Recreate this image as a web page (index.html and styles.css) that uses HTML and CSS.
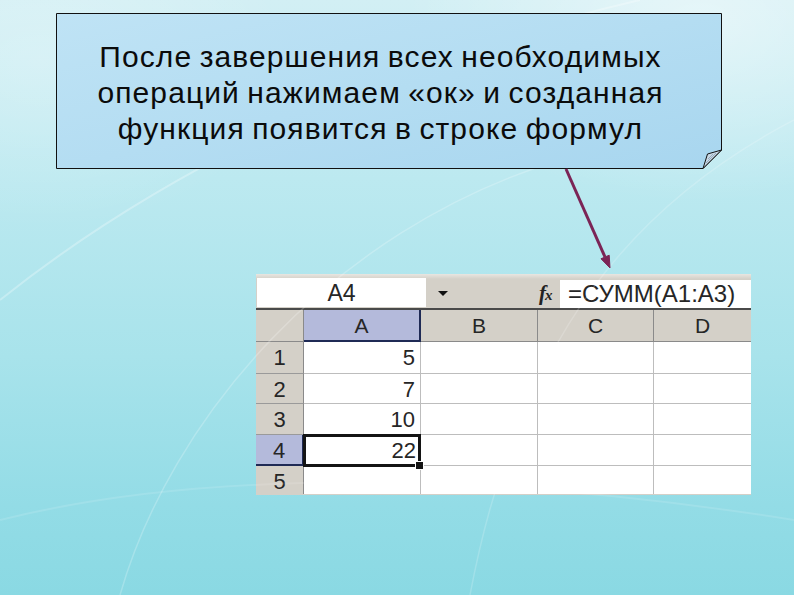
FILE: index.html
```html
<!DOCTYPE html>
<html lang="ru">
<head>
<meta charset="utf-8">
<title>Функция СУММ</title>
<link rel="stylesheet" href="styles.css">
</head>
<body>
<div class="slide">
  <svg class="bg-deco" width="794" height="595" viewBox="0 0 794 595" aria-hidden="true">
    <path d="M0 300 C 150 180, 380 60, 640 0" fill="none" stroke="#ffffff" stroke-opacity="0.28" stroke-width="2"/>
    <path d="M120 595 C 170 420, 330 230, 560 160" fill="none" stroke="#ffffff" stroke-opacity="0.22" stroke-width="1.5"/>
    <path d="M794 120 C 640 200, 520 330, 470 595" fill="none" stroke="#ffffff" stroke-opacity="0.18" stroke-width="1.5"/>
    <path d="M0 520 C 200 470, 480 470, 794 520" fill="none" stroke="#ffffff" stroke-opacity="0.12" stroke-width="2"/>
  </svg>

  <div class="callout">
    <svg class="callout-shape" width="666" height="156" viewBox="0 0 666 156" aria-hidden="true">
      <defs>
        <linearGradient id="cg" x1="0" y1="0" x2="1" y2="1">
          <stop offset="0" stop-color="#bfe3f5"/>
          <stop offset="0.5" stop-color="#b4ddf2"/>
          <stop offset="1" stop-color="#a8d6ef"/>
        </linearGradient>
      </defs>
      <polygon points="0.5,0.5 665.5,0.5 665.5,137 647,155.5 0.5,155.5" fill="url(#cg)" stroke="#111" stroke-width="1"/>
      <polygon points="647,155.5 651.5,141 665.5,137" fill="#c9d9e6" stroke="#111" stroke-width="1"/>
      <path d="M650 150 L 660 140 M 652 146 L 657 141" stroke="#8aa0b4" stroke-width="0.8"/>
    </svg>
    <p class="callout-text">После завершения всех необходимых<br>операций нажимаем «ок» и созданная<br>функция появится в строке формул</p>
  </div>

  <svg class="arrow" width="794" height="595" viewBox="0 0 794 595" aria-hidden="true">
    <line x1="566" y1="169" x2="605" y2="257" stroke="#7b2456" stroke-width="3"/>
    <polygon points="610,268 609.2,255.2 601,258.8" fill="#7b2456" stroke="#7b2456" stroke-width="1"/>
  </svg>

  <div class="sheet">
    <div class="fbar">
      <div class="namebox">A4</div>
      <div class="dd"><span class="dd-arrow"></span></div>
      <div class="fx"><i>f</i><span class="fx-x">x</span></div>
      <div class="formula">=СУММ(A1:A3)</div>
    </div>
    <div class="grid">
      <div class="corner"></div>
      <div class="colh sel">A</div>
      <div class="colh">B</div>
      <div class="colh">C</div>
      <div class="colh last">D</div>

      <div class="rowh">1</div>
      <div class="cell num">5</div>
      <div class="cell"></div>
      <div class="cell"></div>
      <div class="cell last"></div>

      <div class="rowh">2</div>
      <div class="cell num">7</div>
      <div class="cell"></div>
      <div class="cell"></div>
      <div class="cell last"></div>

      <div class="rowh">3</div>
      <div class="cell num">10</div>
      <div class="cell"></div>
      <div class="cell"></div>
      <div class="cell last"></div>

      <div class="rowh sel">4</div>
      <div class="cell num active">22<span class="handle"></span></div>
      <div class="cell"></div>
      <div class="cell"></div>
      <div class="cell last"></div>

      <div class="rowh rlast">5</div>
      <div class="cell blast"></div>
      <div class="cell blast"></div>
      <div class="cell blast"></div>
      <div class="cell blast last"></div>
    </div>
  </div>
</div>
</body>
</html>
```

FILE: styles.css
```css
* { box-sizing: border-box; }

html, body {
  margin: 0;
  padding: 0;
}

body {
  width: 794px;
  height: 595px;
  overflow: hidden;
  font-family: "Liberation Sans", Arial, sans-serif;
}

.slide {
  position: relative;
  width: 794px;
  height: 595px;
  padding-top: 13px;
  background:
    radial-gradient(ellipse 420px 260px at 700px 20px, rgba(255,255,255,0.45), rgba(255,255,255,0) 70%),
    radial-gradient(ellipse 360px 240px at 40px 60px, rgba(255,255,255,0.25), rgba(255,255,255,0) 70%),
    linear-gradient(to bottom, #d2eff4 0%, #bce9f0 30%, #a8e3eb 60%, #93dce6 85%, #8ad9e3 100%);
}

.bg-deco {
  position: absolute;
  left: 0;
  top: 0;
  pointer-events: none;
}

.callout {
  position: relative;
  margin-left: 56px;
  width: 666px;
  height: 156px;
}

.callout-shape {
  position: absolute;
  left: 0;
  top: 0;
}

.callout-text {
  position: relative;
  margin: 0;
  padding: 26px 17px 0 0;
  text-align: center;
  font-size: 30px;
  line-height: 36px;
  color: #0b0b0b;
  letter-spacing: 1.1px;
  word-spacing: -2px;
}

.arrow {
  position: absolute;
  left: 0;
  top: 0;
  pointer-events: none;
}

.sheet {
  margin-top: 105px;
  margin-left: 256px;
  width: 495px;
  height: 221px;
  background: #d4d0c8;
  overflow: hidden;
  color: #262626;
}

.fbar {
  display: flex;
  align-items: flex-start;
  height: 36px;
  padding-top: 4px;
  border-bottom: 2px solid #4a4a4a;
  background: linear-gradient(to bottom, #e8e6e1 0, #d4d0c8 5px);
}

.namebox {
  width: 169px;
  height: 29px;
  margin-left: 1px;
  background: #ffffff;
  text-align: center;
  font-size: 23px;
  line-height: 30px;
}

.dd {
  width: 110px;
  height: 29px;
  display: flex;
  align-items: center;
  padding-left: 12px;
}

.dd-arrow {
  width: 0;
  height: 0;
  border-left: 5px solid transparent;
  border-right: 5px solid transparent;
  border-top: 5px solid #111;
  margin-top: 2px;
}

.fx {
  width: 24px;
  height: 29px;
  font-family: "Liberation Serif", "Times New Roman", serif;
  font-weight: bold;
  font-size: 21px;
  line-height: 30px;
  color: #222;
  padding-left: 3px;
  letter-spacing: -1px;
}

.fx i {
  font-style: italic;
}

.fx-x {
  font-size: 15px;
  font-style: italic;
}

.formula {
  flex: 1;
  height: 28px;
  margin-top: 2px;
  background: #ffffff;
  font-size: 24px;
  line-height: 28px;
  padding-left: 8px;
  white-space: nowrap;
}

.grid {
  display: grid;
  grid-template-columns: 48px 117px 117px 116px 97px;
  grid-template-rows: 32px 32px 30px 31px 31px 28px;
}

.corner {
  background: #d4d0c8;
  border-right: 1px solid #8a8a8a;
  border-bottom: 1px solid #8a8a8a;
}

.colh {
  background: #d4d0c8;
  border-right: 1px solid #8a8a8a;
  border-bottom: 1px solid #8a8a8a;
  text-align: center;
  font-size: 21px;
  line-height: 31px;
}

.colh.sel {
  background: #b4badb;
  border-right: 2px solid #1f2a55;
  border-bottom: 2px solid #1f2a55;
}

.colh.last, .cell.last {
  border-right: none;
}

.rowh {
  background: #d4d0c8;
  border-right: 1px solid #8a8a8a;
  border-bottom: 1px solid #9a9a9a;
  text-align: center;
  font-size: 22px;
  line-height: 31px;
}

.rowh.sel {
  background: #b4badb;
  border-right: 2px solid #1f2a55;
  border-bottom: 2px solid #1f2a55;
}

.rowh.rlast {
  border-bottom: none;
}

.cell {
  position: relative;
  background: #ffffff;
  border-right: 1px solid #bdbdbd;
  border-bottom: 1px solid #bdbdbd;
  font-size: 22px;
  line-height: 31px;
}

.cell.blast {
  border-bottom: none;
}

.cell.num {
  text-align: right;
  padding-right: 5px;
}

.cell.active {
  z-index: 2;
  border: 3px solid #141414;
  margin: -1px 0 -1px -1px;
  line-height: 27px;
  padding-right: 2px;
}

.handle {
  position: absolute;
  right: -6px;
  bottom: -6px;
  width: 9px;
  height: 9px;
  background: #141414;
  border: 1px solid #ffffff;
}
```
